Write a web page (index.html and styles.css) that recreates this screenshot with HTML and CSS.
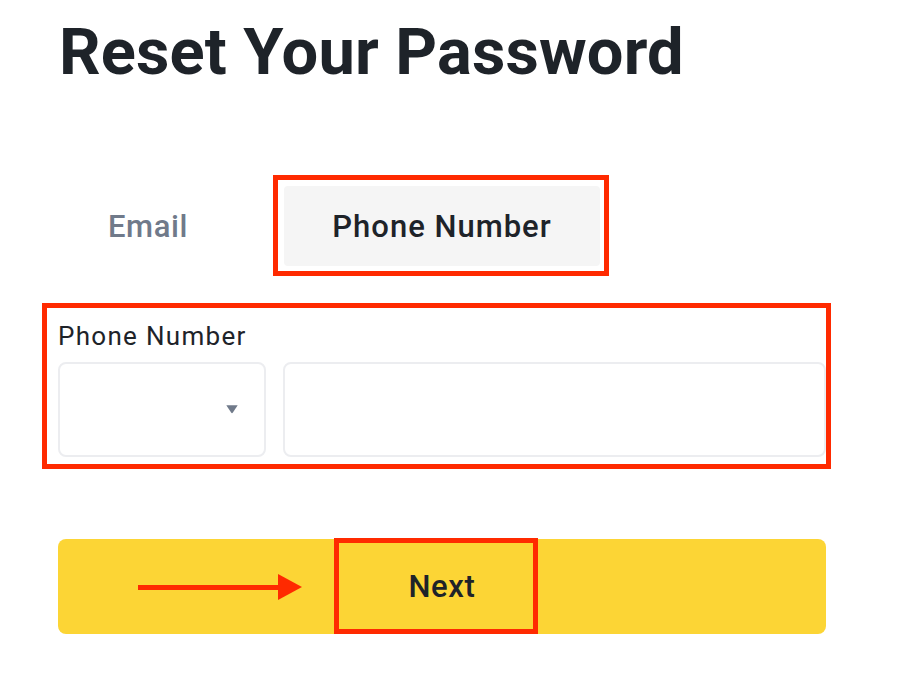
FILE: index.html
```html
<!DOCTYPE html>
<html lang="en">
<head>
<meta charset="utf-8">
<title>Reset Your Password</title>
<link rel="stylesheet" href="styles.css">
</head>
<body>
<main class="page">
  <h1 class="title">Reset Your Password</h1>

  <div class="tabs">
    <div class="tab tab-email">Email</div>
    <div class="mark mark-tab">
      <div class="tab tab-active">Phone Number</div>
    </div>
  </div>

  <div class="mark mark-form">
    <label class="field-label">Phone Number</label>
    <div class="field-row">
      <div class="input select">
        <svg class="caret" width="12" height="9" viewBox="0 0 12 9" aria-hidden="true">
          <path d="M0.3 0.3 H11.7 L6.9 7.6 Q6 8.8 5.1 7.6 Z" fill="#707A8A"/>
        </svg>
      </div>
      <div class="input phone"></div>
    </div>
  </div>

  <div class="btn">
    <svg class="arrow" width="166" height="26" viewBox="0 0 166 26" aria-hidden="true">
      <rect x="0" y="11" width="144" height="5" fill="#FF2A00"/>
      <polygon points="140,0 164,13 140,26" fill="#FF2A00"/>
    </svg>
    <span class="mark mark-btn">Next</span>
  </div>
</main>
</body>
</html>
```

FILE: styles.css
```css
* { box-sizing: border-box; }

html, body {
  margin: 0;
  padding: 0;
  background: #ffffff;
}

body {
  font-family: Roboto, "Liberation Sans", Arial, sans-serif;
  color: #1E2329;
}

.page {
  width: 898px;
  height: 678px;
  padding: 20px 72px 0 58px;
  overflow: hidden;
}

.title {
  margin: 0 0 0 1px;
  font-size: 65px;
  line-height: 65px;
  font-weight: 700;
  letter-spacing: 0.15px;
  color: #1E2329;
}

.tabs {
  display: flex;
  align-items: flex-start;
  margin-top: 90px;
}

.tab {
  height: 80px;
  display: flex;
  align-items: center;
  justify-content: center;
  font-size: 31px;
  font-weight: 500;
  letter-spacing: 0.6px;
}

.tab-email {
  width: 180px;
  margin-top: 11px;
  color: #707A8A;
}

.mark {
  border: 5px solid #FF2A00;
}

.mark-tab {
  margin-left: 35px;
  padding: 6px 4px 5px 6px;
}

.tab-active {
  width: 316px;
  background: #F5F5F5;
  border-radius: 4px;
  color: #1E2329;
  letter-spacing: 1px;
}

.mark-form {
  margin: 27px 0 0 -16px;
  width: 789px;
  padding: 13px 0 7px 11px;
}

.field-label {
  display: block;
  font-size: 26px;
  line-height: 30px;
  font-weight: 400;
  letter-spacing: 1.3px;
  color: #1E2329;
}

.field-row {
  display: flex;
  gap: 17px;
  margin-top: 11px;
}

.input {
  height: 95px;
  border: 2px solid #ECEDF0;
  border-radius: 8px;
  background: #ffffff;
}

.select {
  width: 208px;
  display: flex;
  align-items: center;
  justify-content: flex-end;
  padding-right: 26px;
}

.caret { display: block; }

.phone { flex: 1; }

.btn {
  position: relative;
  margin-top: 70px;
  width: 768px;
  height: 95px;
  background: #FCD535;
  border-radius: 8px;
  display: flex;
  align-items: flex-start;
  justify-content: center;
}

.arrow {
  position: absolute;
  left: 80px;
  top: 35px;
}

.mark-btn {
  width: 204px;
  height: 96px;
  margin: -1px 12px 0 0;
  padding-left: 12px;
  display: flex;
  align-items: center;
  justify-content: center;
  font-size: 31px;
  font-weight: 500;
  letter-spacing: 0.6px;
  color: #1E2329;
}
```
